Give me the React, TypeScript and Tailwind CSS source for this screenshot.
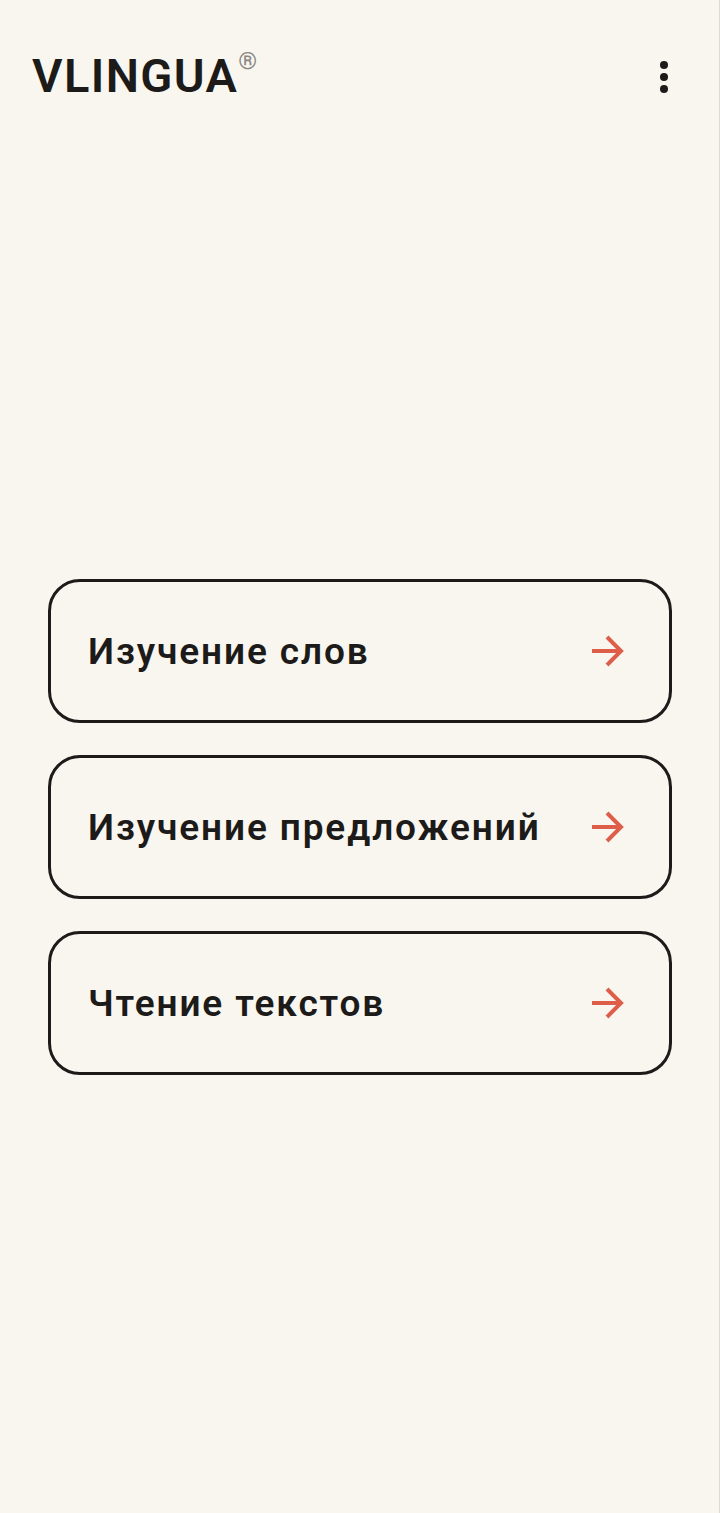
import React from "react";

const items = ["Изучение слов", "Изучение предложений", "Чтение текстов"];

function ArrowIcon() {
  return (
    <svg width="34" height="34" viewBox="0 0 34 34" fill="none" className="shrink-0">
      <path d="M2 17H31M17 3L31 17L17 31" stroke="#DD5F4A" strokeWidth="4" />
    </svg>
  );
}

export default function App() {
  return (
    <div className="flex h-[1513px] flex-col border-r border-[#dcdad6] bg-[#F9F6F0] font-['Roboto',sans-serif] text-[#1C1B19]">
      {/* Header */}
      <div className="flex h-[130px] items-start justify-between pl-8 pr-[51px] pt-[47px]">
        <div className="flex items-start">
          <span className="text-[47px] font-[650] leading-[58px] tracking-[1.4px]">VLINGUA</span>
          <span className="text-[24px] leading-[28px] text-[#8a8884]">®</span>
        </div>
        <div className="mt-[14px] flex flex-col gap-[4px]">
          <span className="h-2 w-2 rounded-full bg-[#1C1B19]" />
          <span className="h-2 w-2 rounded-full bg-[#1C1B19]" />
          <span className="h-2 w-2 rounded-full bg-[#1C1B19]" />
        </div>
      </div>

      {/* Menu */}
      <div className="mt-[449px] flex flex-col gap-8 pl-12 pr-[47px]">
        {items.map((item) => (
          <button
            key={item}
            className="flex h-[144px] items-center justify-between rounded-[32px] border-[3px] border-[#1C1B19] pl-[37px] pr-[45px] text-left"
          >
            <span className="block pt-[2px] text-[37px] font-[650] leading-[44px] tracking-[1.88px]">{item}</span>
            <ArrowIcon />
          </button>
        ))}
      </div>
    </div>
  );
}
